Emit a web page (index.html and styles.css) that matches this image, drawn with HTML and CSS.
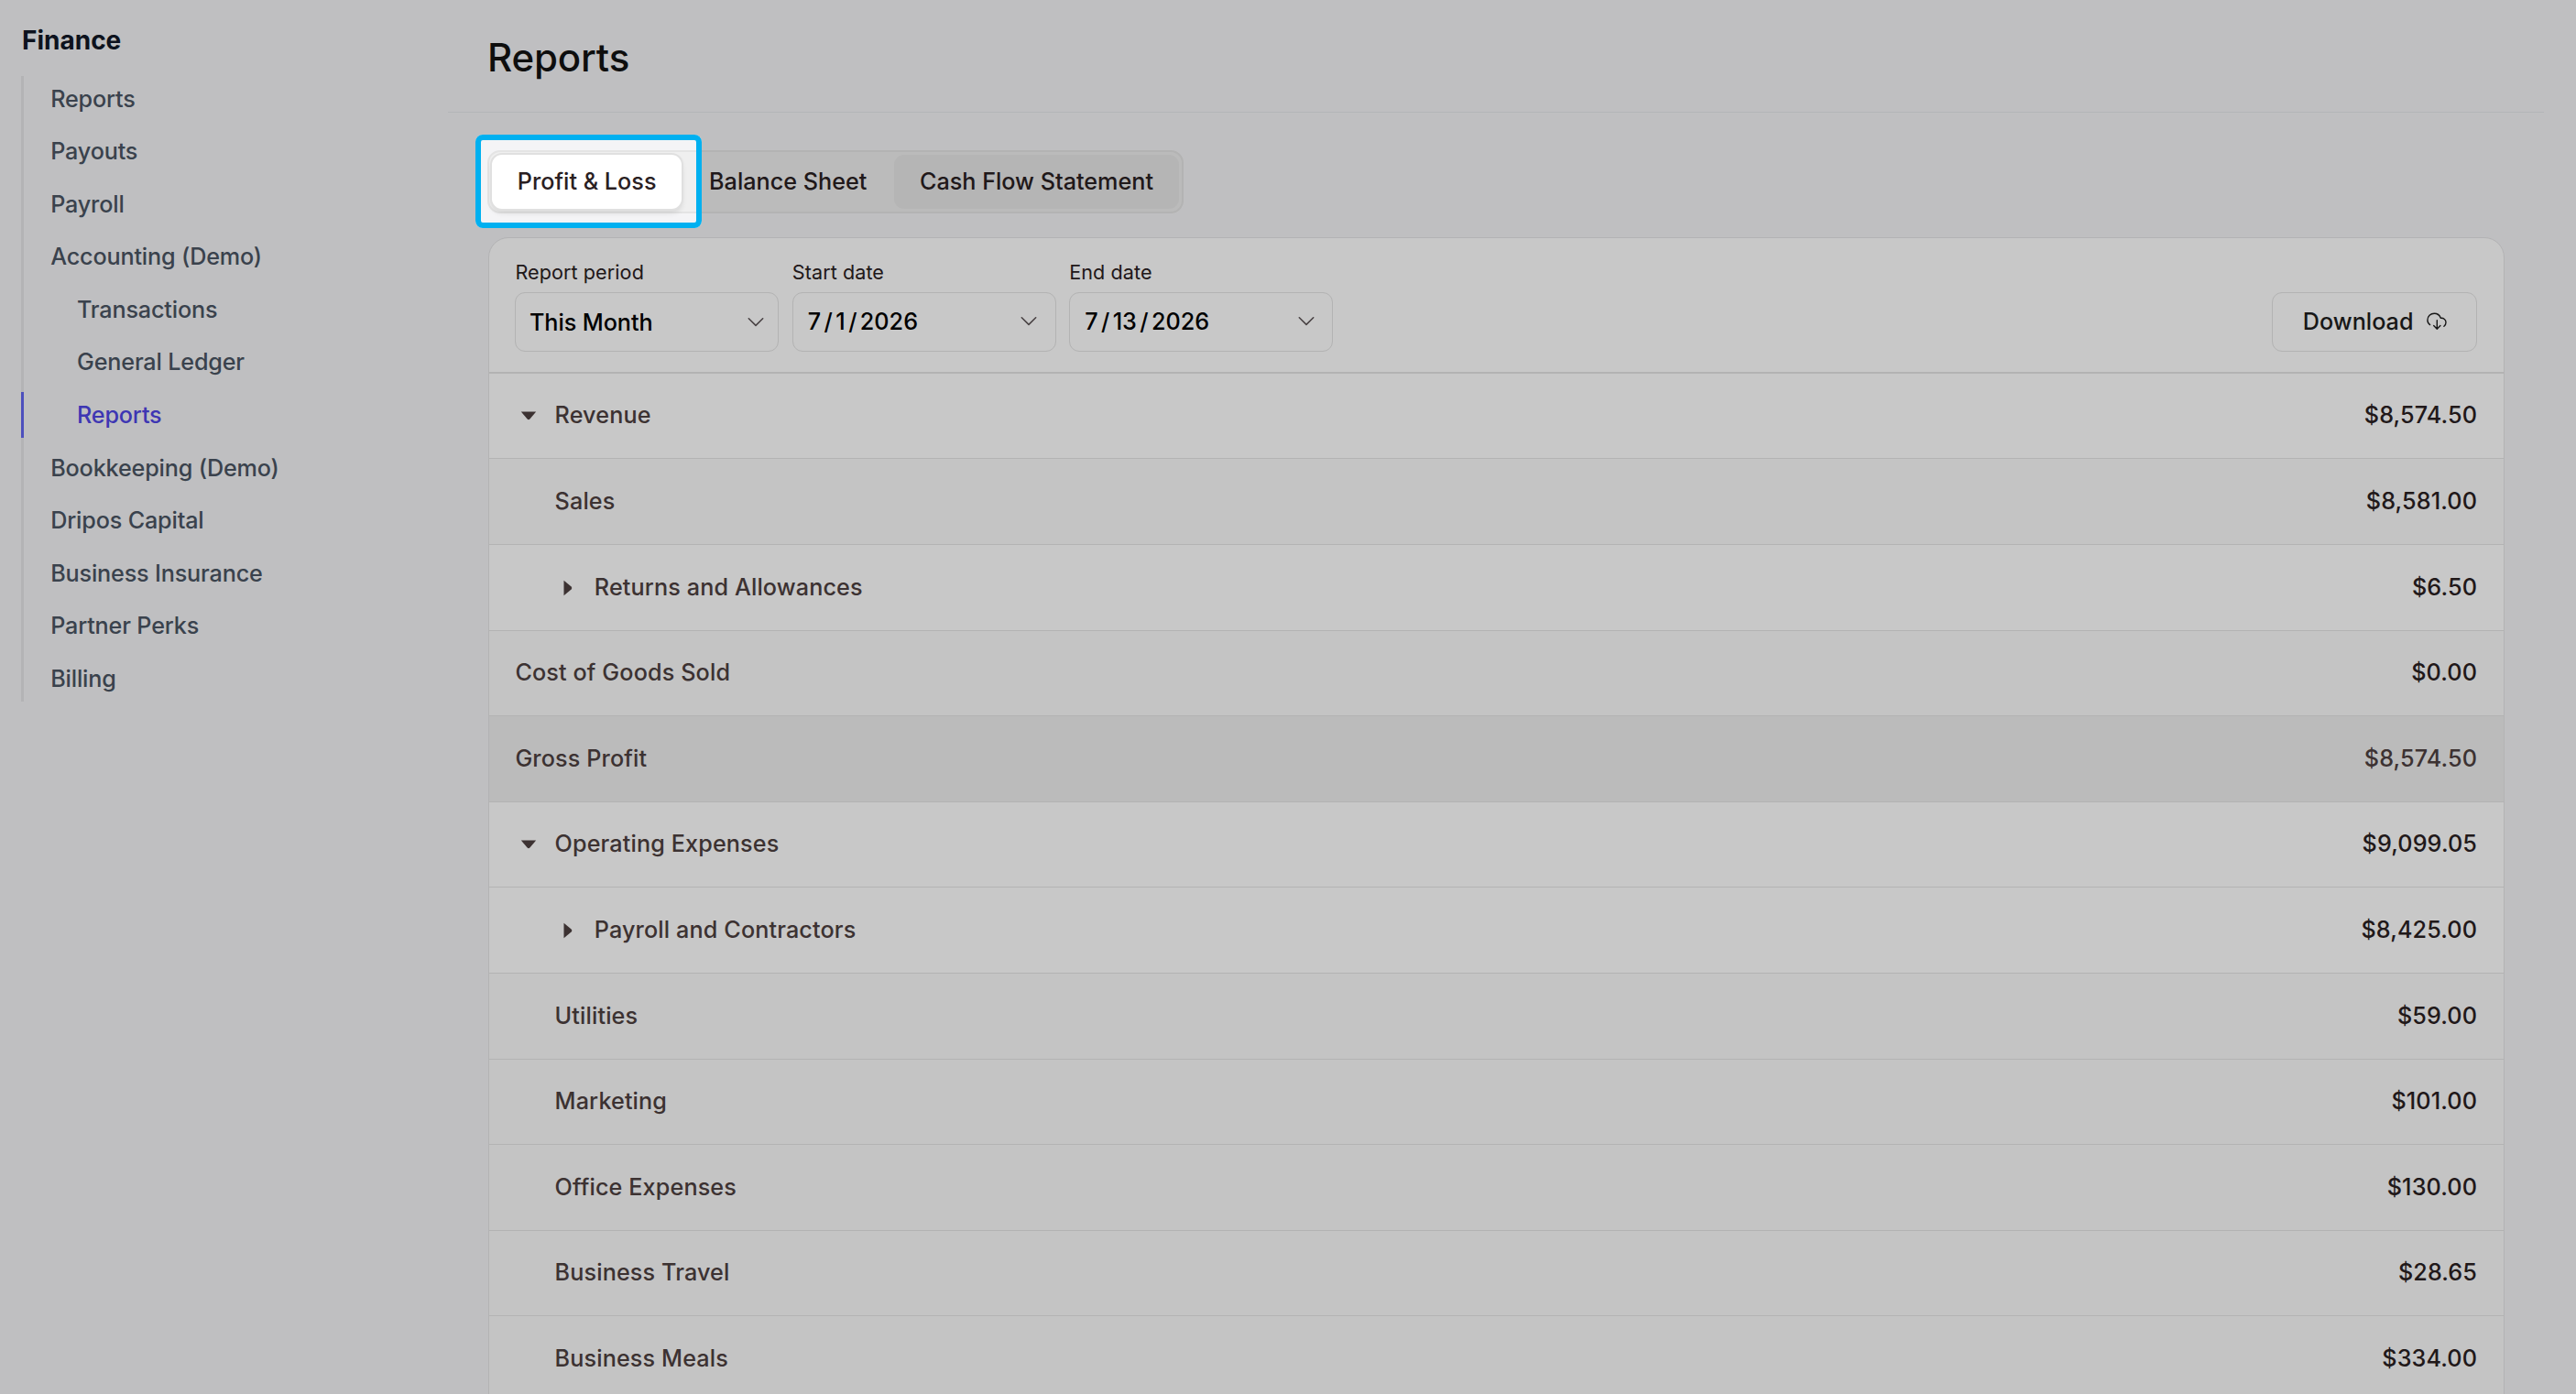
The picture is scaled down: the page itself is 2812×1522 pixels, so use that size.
FILE: index.html
```
<!DOCTYPE html>
<html lang="en">
<head>
    <meta charset="UTF-8">
    <meta name="viewport" content="width=device-width, initial-scale=1.0">
    <title>Reports</title>
    <link rel="stylesheet" href="styles.css">
</head>
<body>

<div class="app">
    <aside class="sidebar">
        <h2>Finance</h2>
        <nav class="menu">
            <a>Reports</a>
            <a>Payouts</a>
            <a>Payroll</a>
            <a>Accounting (Demo)</a>
            <a class="sub">Transactions</a>
            <a class="sub">General Ledger</a>
            <a class="sub active">Reports</a>
            <a>Bookkeeping (Demo)</a>
            <a>Dripos Capital</a>
            <a>Business Insurance</a>
            <a>Partner Perks</a>
            <a>Billing</a>
        </nav>
    </aside>

    <main class="main">
        <header class="page-header">
            <h1>Reports</h1>
        </header>

        <div class="content">
            <div class="tabs">
                <div class="tab selected">Profit &amp; Loss<span class="highlight"></span></div>
                <div class="tab">Balance Sheet</div>
                <div class="tab hovered">Cash Flow Statement</div>
            </div>

            <section class="card">
                <div class="filters">
                    <div class="field">
                        <label>Report period</label>
                        <div class="select period">
                            <span>This Month</span>
                            <svg class="chevron" viewBox="0 0 18 12"><path d="M1.3 1.8 L9 9.4 L16.7 1.8"/></svg>
                        </div>
                    </div>
                    <div class="field">
                        <label>Start date</label>
                        <div class="select">
                            <div class="date"><span>7</span><span>/</span><span>1</span><span>/</span><span>2026</span></div>
                            <svg class="chevron" viewBox="0 0 18 12"><path d="M1.3 1.8 L9 9.4 L16.7 1.8"/></svg>
                        </div>
                    </div>
                    <div class="field">
                        <label>End date</label>
                        <div class="select">
                            <div class="date"><span>7</span><span>/</span><span>13</span><span>/</span><span>2026</span></div>
                            <svg class="chevron" viewBox="0 0 18 12"><path d="M1.3 1.8 L9 9.4 L16.7 1.8"/></svg>
                        </div>
                    </div>
                    <div class="download">
                        <span>Download</span>
                        <svg class="cloud" viewBox="0 0 22 20">
                            <path d="M3.6 13.6 C1.8 12.4 0.9 10.6 0.9 8.5 C0.9 4.4 4.2 1.3 8.3 1.3 C11.6 1.3 14.2 3.2 15.3 6.3 C18.6 6 21 8.2 21 11 C21 13 20.2 14.3 18.9 15.3"/>
                            <path d="M11.3 8.8 V18 M7.7 14.6 L11.3 18.2 L14.9 14.6"/>
                        </svg>
                    </div>
                </div>

                <div class="row parent">
                    <span class="toggle"><svg class="arrow" viewBox="0 0 18 10"><path d="M0.8 0.5 H17.2 L10.4 8.6 Q9 10 7.6 8.6 Z"/></svg></span>
                    <span class="name">Revenue</span>
                    <span class="amount">$8,574.50</span>
                </div>
                <div class="row level1">
                    <span class="name">Sales</span>
                    <span class="amount">$8,581.00</span>
                </div>
                <div class="row parent level1">
                    <span class="toggle"><svg class="arrow side" viewBox="0 0 10 18"><path d="M0.5 0.8 V17.2 L8.6 10.4 Q10 9 8.6 7.6 Z"/></svg></span>
                    <span class="name">Returns and Allowances</span>
                    <span class="amount">$6.50</span>
                </div>
                <div class="row">
                    <span class="name">Cost of Goods Sold</span>
                    <span class="amount">$0.00</span>
                </div>
                <div class="row total">
                    <span class="name">Gross Profit</span>
                    <span class="amount">$8,574.50</span>
                </div>
                <div class="row parent">
                    <span class="toggle"><svg class="arrow" viewBox="0 0 18 10"><path d="M0.8 0.5 H17.2 L10.4 8.6 Q9 10 7.6 8.6 Z"/></svg></span>
                    <span class="name">Operating Expenses</span>
                    <span class="amount">$9,099.05</span>
                </div>
                <div class="row parent level1">
                    <span class="toggle"><svg class="arrow side" viewBox="0 0 10 18"><path d="M0.5 0.8 V17.2 L8.6 10.4 Q10 9 8.6 7.6 Z"/></svg></span>
                    <span class="name">Payroll and Contractors</span>
                    <span class="amount">$8,425.00</span>
                </div>
                <div class="row level1">
                    <span class="name">Utilities</span>
                    <span class="amount">$59.00</span>
                </div>
                <div class="row level1">
                    <span class="name">Marketing</span>
                    <span class="amount">$101.00</span>
                </div>
                <div class="row level1">
                    <span class="name">Office Expenses</span>
                    <span class="amount">$130.00</span>
                </div>
                <div class="row level1">
                    <span class="name">Business Travel</span>
                    <span class="amount">$28.65</span>
                </div>
                <div class="row level1">
                    <span class="name">Business Meals</span>
                    <span class="amount">$334.00</span>
                </div>
            </section>
        </div>
    </main>
</div>

</body>
</html>
```

FILE: styles.css
```
* {
    box-sizing: border-box;
}
body {
    margin: 0;
    height: 1522px;
    overflow: hidden;
    background: #f4f4f6;
    font-family: Inter, "Liberation Sans", sans-serif;
    font-size: 25.2px;
    font-weight: 500;
}
.app {
    display: flex;
    height: 1522px;
    overflow: hidden;
}

/* Sidebar */
.sidebar {
    width: 489px;
    flex-shrink: 0;
    padding: 26px 0 0 23px;
}
.sidebar h2 {
    margin: 0 0 20.6px 1px;
    font-size: 28px;
    line-height: 36px;
    font-weight: 700;
    color: #111827;
}
.menu {
    display: flex;
    flex-direction: column;
    gap: 7.2px;
    box-shadow: inset 3px 0 #e5e5e7;
}
.menu a {
    height: 50.4px;
    line-height: 51.4px;
    padding-left: 29.2px;
    border-left: 3px solid transparent;
    letter-spacing: -0.17px;
    color: #4b5563;
}
.menu .sub {
    padding-left: 58px;
}
.menu .active {
    color: #4f46e5;
    border-left-color: #6366f1;
}

/* Page */
.main {
    flex: 1;
    padding-right: 35px;
}
.page-header {
    height: 123px;
    padding: 37px 0 0 43px;
    border-bottom: 1px solid #e5e7eb;
}
.page-header h1 {
    margin: 0;
    font-size: 42px;
    line-height: 52px;
    font-weight: 500;
    letter-spacing: -0.15px;
    color: #131313;
}
.content {
    padding: 41px 43px 0 43px;
}

/* Tabs */
.tabs {
    display: inline-flex;
    gap: 2px;
    height: 69px;
    padding: 3px;
    border: 2px solid #e4e4e4;
    border-radius: 14px;
    background: #efefef;
    vertical-align: top;
}
.tab {
    position: relative;
    height: 59px;
    line-height: 58px;
    padding: 0 27.8px;
    border-radius: 11px;
    color: #2a2022;
}
.tab.selected {
    background: #fff;
    box-shadow: 0 0 0 2px #e0e0e0, 0 4px 6px rgba(0, 0, 0, 0.12);
}
.tab.hovered {
    background: #e7e7e7;
}
/* Spotlight frame: the large spread dims the rest of the page */
.highlight {
    position: absolute;
    z-index: 10;
    left: -18px;
    top: -22px;
    width: 247px;
    height: 102px;
    border: 6px solid #00b0f0;
    border-radius: 8px;
    box-shadow: 0 0 0 4000px rgba(0, 0, 0, 0.216);
}

/* Report card */
.card {
    margin: 26px 0 0 1px;
    border: 1px solid #e4e4e6;
    border-radius: 22px 22px 0 0;
    background: #fff;
}
.filters {
    display: flex;
    align-items: flex-end;
    gap: 14.4px;
    height: 147.8px;
    padding: 0 28.8px 21.8px 28.4px;
    border-bottom: 2px solid #e4e4e4;
}
.field label {
    display: block;
    margin-bottom: 8px;
    font-size: 21.6px;
    line-height: 28px;
    font-weight: 400;
    letter-spacing: 0.07px;
    color: #2a2022;
}
.select {
    display: flex;
    align-items: center;
    justify-content: space-between;
    width: 288px;
    height: 65px;
    padding: 0 19.6px 1px 16px;
    border: 1px solid #e4e4e4;
    border-radius: 11px;
    color: #000;
}
.select.period {
    padding: 0 15.4px 0 14.6px;
}
.period span {
    letter-spacing: -0.08px;
}
.date {
    display: flex;
    gap: 3.4px;
}
.chevron {
    width: 18px;
    height: 12px;
    fill: none;
    stroke: #5e5658;
    stroke-width: 1.6;
    stroke-linecap: round;
    stroke-linejoin: round;
}
.download {
    display: flex;
    align-items: center;
    justify-content: space-between;
    width: 224px;
    height: 65px;
    margin-left: auto;
    padding: 0 32px 1px 32.6px;
    border: 1px solid #e4e4e4;
    border-radius: 11px;
    color: #1e1e1e;
}
.cloud {
    width: 22px;
    height: 20px;
    fill: none;
    stroke: #1e1e1e;
    stroke-width: 1.4;
    stroke-linecap: round;
    stroke-linejoin: round;
}

.row {
    display: flex;
    align-items: center;
    height: 93.6px;
    padding: 0 29px 1.4px 28.4px;
    border-bottom: 1px solid #e4e4e4;
    background: #fafafa;
}
.row.parent {
    background: #fff;
}
.row.total {
    background: #efefef;
}
.row.level1 {
    padding-left: 71.6px;
}
.toggle {
    display: flex;
    justify-content: center;
    width: 28.8px;
    margin-right: 14.4px;
    padding-top: 2px;
}
.arrow {
    width: 18px;
    height: 10px;
    fill: #4d4040;
}
.arrow.side {
    width: 10px;
    height: 18px;
}
.name {
    letter-spacing: 0.12px;
    color: #4d4040;
}
.amount {
    margin-left: auto;
    letter-spacing: 0.1px;
    color: #2a2022;
}
.total .amount {
    color: #4d4040;
}
```
